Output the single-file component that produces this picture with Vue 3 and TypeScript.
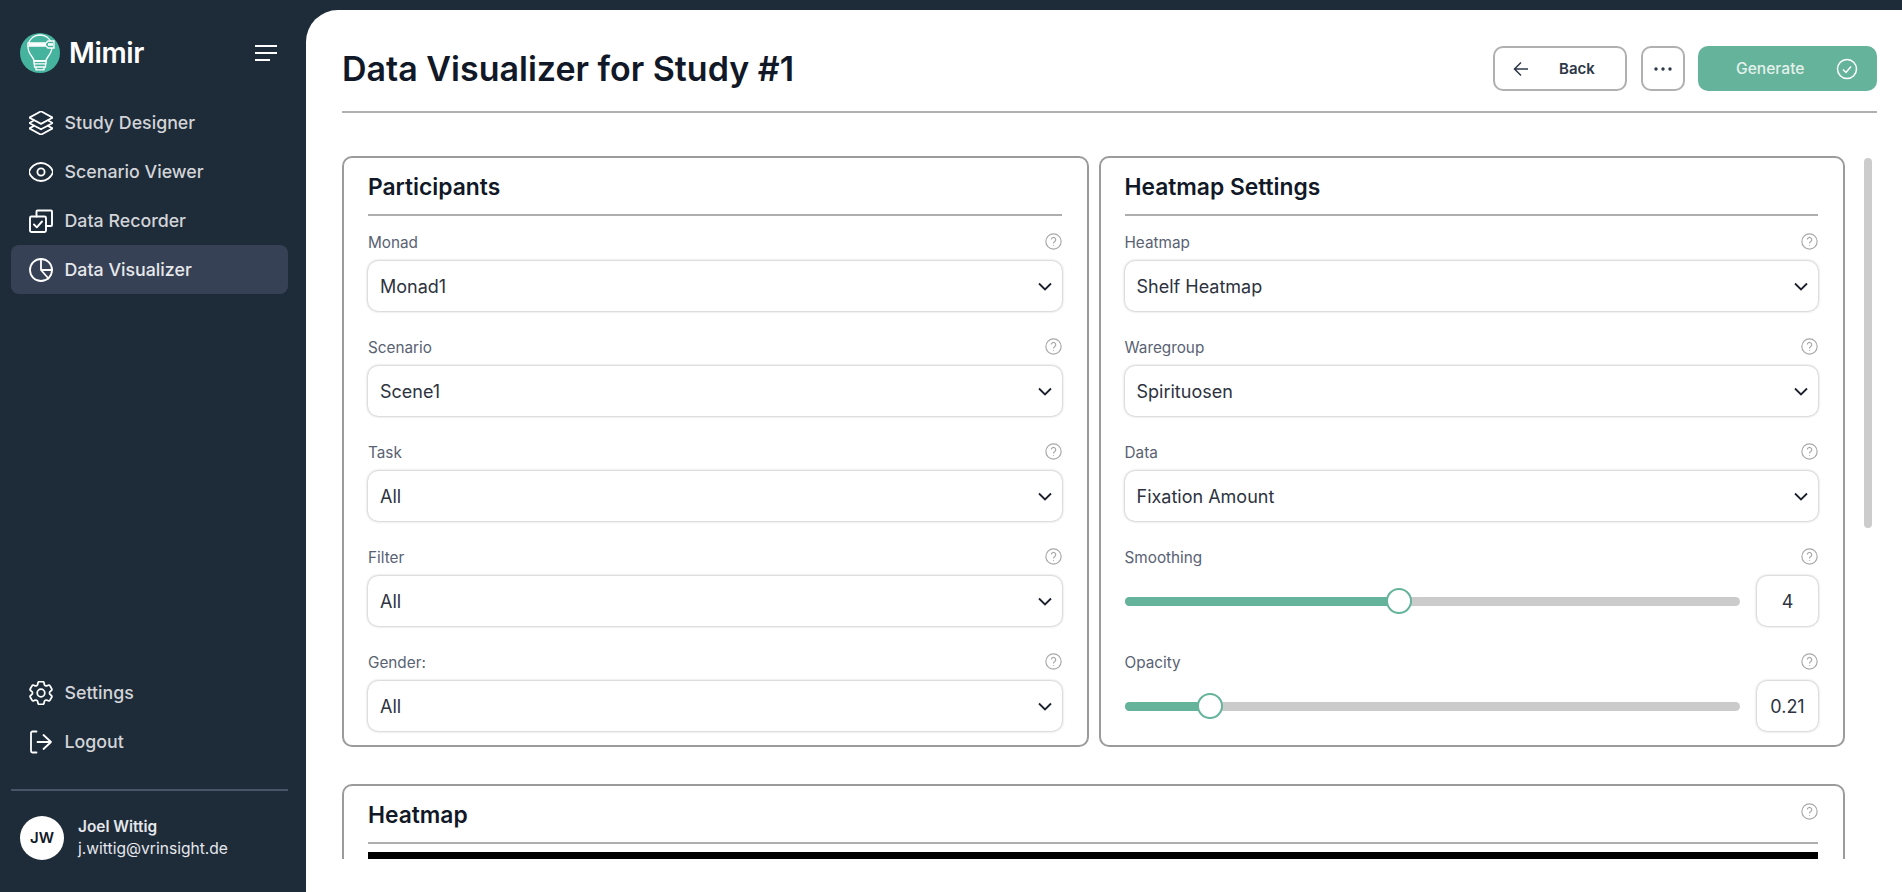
<script setup lang="ts">
interface SelectField { label: string; value: string }
interface SliderField { label: string; value: string; percent: number }

const participantFields: SelectField[] = [
  { label: 'Monad', value: 'Monad1' },
  { label: 'Scenario', value: 'Scene1' },
  { label: 'Task', value: 'All' },
  { label: 'Filter', value: 'All' },
  { label: 'Gender:', value: 'All' },
]
const heatmapSelects: SelectField[] = [
  { label: 'Heatmap', value: 'Shelf Heatmap' },
  { label: 'Waregroup', value: 'Spirituosen' },
  { label: 'Data', value: 'Fixation Amount' },
]
const sliders: SliderField[] = [
  { label: 'Smoothing', value: '4', percent: 44.6 },
  { label: 'Opacity', value: '0.21', percent: 13.9 },
]
</script>

<template>
  <div class="app">
    <aside class="sidebar">
      <div class="brand">
        <svg class="logo" viewBox="0 0 40 40" fill="none" stroke="#fff" stroke-width="1.300">
          <circle cx="20" cy="20" r="20" fill="#45b39d" stroke="none" />
          <path d="M14 28c0-4-6-6.500-6-14C8 7 13.500 2 20 2s12 5 12 12c0 7.500-6 10-6 14z" />
          <path d="M14 28h12v2.800H14zM14.500 31v3h11v-3M16 34v2.800h8V34" />
          <path d="M8 10h18l2-2h6v7h-6l-2-2H8z" fill="#45b39d" />
          <path d="M9 11.500h17M28 11.500h5" stroke-width="2.400" />
        </svg>
        <span class="brand-name">Mimir</span>
        <svg class="menu" viewBox="0 0 22 16" fill="none" stroke="#fff" stroke-width="2">
          <path d="M0 1h22M0 8h22M0 15h15" />
        </svg>
      </div>

      <nav class="nav">
        <a class="nav-item">
          <svg class="nav-icon" viewBox="2 2 20 20" fill="none" stroke="currentColor" stroke-width="1.500" stroke-linecap="round" stroke-linejoin="round">
            <path d="M6.429 9.750 2.250 12l4.179 2.250m0-4.500 5.571 3 5.571-3m-11.142 0L2.250 7.500 12 2.250l9.750 5.250-4.179 2.250m0 0L21.750 12l-4.179 2.250m0 0 4.179 2.250L12 21.750 2.250 16.500l4.179-2.250m11.142 0-5.571 3-5.571-3" />
          </svg>
          Study Designer
        </a>
        <a class="nav-item">
          <svg class="nav-icon" viewBox="2 2 20 20" fill="none" stroke="currentColor" stroke-width="1.500" stroke-linecap="round" stroke-linejoin="round">
            <path d="M2.036 12.322a1.012 1.012 0 0 1 0-.639C3.423 7.510 7.360 4.500 12 4.500c4.638 0 8.573 3.007 9.963 7.178.07.207.07.431 0 .639C20.577 16.490 16.640 19.500 12 19.500c-4.638 0-8.573-3.007-9.963-7.178Z" />
            <path d="M15 12a3 3 0 1 1-6 0 3 3 0 0 1 6 0Z" />
          </svg>
          Scenario Viewer
        </a>
        <a class="nav-item">
          <svg class="nav-icon" viewBox="0 0 24 24" fill="none" stroke="currentColor" stroke-width="1.900" stroke-linecap="round" stroke-linejoin="round">
            <path d="M7.500 7.500V2.500a1 1 0 0 1 1-1H22a1 1 0 0 1 1 1V16a1 1 0 0 1-1 1h-5" />
            <rect x="1" y="7.500" width="16" height="15.500" rx="1.500" />
            <path d="m5 15.500 2.800 2.800L13 12.500" />
          </svg>
          Data Recorder
        </a>
        <a class="nav-item active">
          <svg class="nav-icon" viewBox="0 0 24 24" fill="none" stroke="currentColor" stroke-width="1.800" stroke-linecap="round" stroke-linejoin="round">
            <circle cx="12" cy="12" r="11" />
            <path d="M12 1v11h11M12 12l7.500 8.500" />
          </svg>
          Data Visualizer
        </a>
      </nav>

      <nav class="nav nav-bottom">
        <a class="nav-item">
          <svg class="nav-icon" viewBox="2.500 2.500 19 19" fill="none" stroke="currentColor" stroke-width="1.400" stroke-linecap="round" stroke-linejoin="round">
            <path d="M9.594 3.940c.09-.542.560-.940 1.110-.940h2.593c.550 0 1.020.398 1.110.940l.213 1.281c.063.374.313.686.645.870.074.040.147.083.220.127.325.196.720.257 1.075.124l1.217-.456a1.125 1.125 0 0 1 1.370.490l1.296 2.247a1.125 1.125 0 0 1-.260 1.431l-1.003.827c-.293.241-.438.613-.430.992a7.723 7.723 0 0 1 0 .255c-.008.378.137.750.430.991l1.004.827c.424.350.534.955.260 1.430l-1.298 2.247a1.125 1.125 0 0 1-1.369.491l-1.217-.456c-.355-.133-.750-.072-1.076.124a6.470 6.470 0 0 1-.220.128c-.331.183-.581.495-.644.869l-.213 1.281c-.090.543-.560.940-1.110.940h-2.594c-.550 0-1.019-.398-1.110-.940l-.213-1.281c-.062-.374-.312-.686-.644-.870a6.520 6.520 0 0 1-.220-.127c-.325-.196-.720-.257-1.076-.124l-1.217.456a1.125 1.125 0 0 1-1.369-.490l-1.297-2.247a1.125 1.125 0 0 1 .260-1.431l1.004-.827c.292-.240.437-.613.430-.991a6.932 6.932 0 0 1 0-.255c.007-.380-.138-.751-.430-.992l-1.004-.827a1.125 1.125 0 0 1-.260-1.430l1.297-2.247a1.125 1.125 0 0 1 1.370-.491l1.216.456c.356.133.751.072 1.076-.124.072-.044.146-.086.220-.128.332-.183.582-.495.644-.869l.214-1.280Z" />
            <path d="M15 12a3 3 0 1 1-6 0 3 3 0 0 1 6 0Z" />
          </svg>
          Settings
        </a>
        <a class="nav-item">
          <svg class="nav-icon" viewBox="0 0 24 24" fill="none" stroke="currentColor" stroke-width="1.800" stroke-linecap="round" stroke-linejoin="round">
            <path d="M7.500 1.500H3.500A1.500 1.500 0 0 0 2 3v18a1.500 1.500 0 0 0 1.500 1.500h4M8.500 12H22m-7.500-7 7.500 7-7.500 7" />
          </svg>
          Logout
        </a>
      </nav>

      <div class="user">
        <div class="avatar">JW</div>
        <div class="user-text">
          <div class="user-name">Joel Wittig</div>
          <div class="user-mail">j.wittig@vrinsight.de</div>
        </div>
      </div>
    </aside>

    <main class="main">
      <header class="header">
        <h1 class="title">Data Visualizer for Study #1</h1>
        <div class="actions">
          <button class="btn btn-back">
            <svg class="btn-icon" viewBox="0 0 16 16" fill="none" stroke="#2d3748" stroke-width="1.500">
              <path d="M15 8H1.500M8 1.500 1.500 8 8 14.500" />
            </svg>
            <span>Back</span>
          </button>
          <button class="btn btn-more">
            <svg class="dots" viewBox="0 0 18 4" fill="#2d3748">
              <circle cx="2" cy="2" r="1.700" /><circle cx="9" cy="2" r="1.700" /><circle cx="16" cy="2" r="1.700" />
            </svg>
          </button>
          <button class="btn btn-generate">
            <span>Generate</span>
            <svg class="check" viewBox="0 0 22 22" fill="none" stroke="#fff" stroke-width="1.500">
              <circle cx="11" cy="11" r="9.500" /><path d="m7 11.500 3 3 5-6" />
            </svg>
          </button>
        </div>
      </header>

      <div class="scroll">
        <div class="thumb-bar"></div>
        <div class="grid">
          <section class="card">
            <h2 class="card-title">Participants</h2>
            <div v-for="f in participantFields" :key="f.label" class="field">
              <div class="field-head">
                <label>{{ f.label }}</label>
                <svg class="help" viewBox="0 0 16 16" fill="none" stroke="#a8a8a8" stroke-width="1.100">
                  <circle cx="8" cy="8" r="7.200" />
                  <path d="M5.900 6.200a2.100 2.100 0 1 1 3.300 1.800c-.8.500-1.200.9-1.200 1.800M8 11.500v.8" />
                </svg>
              </div>
              <div class="select">
                <span>{{ f.value }}</span>
                <svg class="chev" viewBox="0 0 14 9" fill="none" stroke="#1a202c" stroke-width="1.800">
                  <path d="m1 1.500 6 6 6-6" />
                </svg>
              </div>
            </div>
          </section>

          <section class="card">
            <h2 class="card-title">Heatmap Settings</h2>
            <div v-for="f in heatmapSelects" :key="f.label" class="field">
              <div class="field-head">
                <label>{{ f.label }}</label>
                <svg class="help" viewBox="0 0 16 16" fill="none" stroke="#a8a8a8" stroke-width="1.100">
                  <circle cx="8" cy="8" r="7.200" />
                  <path d="M5.900 6.200a2.100 2.100 0 1 1 3.300 1.800c-.8.500-1.200.9-1.200 1.800M8 11.500v.8" />
                </svg>
              </div>
              <div class="select">
                <span>{{ f.value }}</span>
                <svg class="chev" viewBox="0 0 14 9" fill="none" stroke="#1a202c" stroke-width="1.800">
                  <path d="m1 1.500 6 6 6-6" />
                </svg>
              </div>
            </div>
            <div v-for="s in sliders" :key="s.label" class="field">
              <div class="field-head">
                <label>{{ s.label }}</label>
                <svg class="help" viewBox="0 0 16 16" fill="none" stroke="#a8a8a8" stroke-width="1.100">
                  <circle cx="8" cy="8" r="7.200" />
                  <path d="M5.900 6.200a2.100 2.100 0 1 1 3.300 1.800c-.8.500-1.200.9-1.200 1.800M8 11.500v.8" />
                </svg>
              </div>
              <div class="slider-row">
                <div class="track">
                  <div class="fill" :style="{ width: s.percent + '%' }"></div>
                  <div class="knob" :style="{ left: s.percent + '%' }"></div>
                </div>
                <div class="num">{{ s.value }}</div>
              </div>
            </div>
          </section>
        </div>

        <section class="card card-wide">
          <h2 class="card-title">Heatmap</h2>
          <svg class="help help-wide" viewBox="0 0 16 16" fill="none" stroke="#a8a8a8" stroke-width="1.100">
            <circle cx="8" cy="8" r="7.200" />
            <path d="M5.900 6.200a2.100 2.100 0 1 1 3.300 1.800c-.8.500-1.200.9-1.200 1.800M8 11.500v.8" />
          </svg>
          <div class="canvas"></div>
        </section>
      </div>
    </main>
  </div>
</template>

<style scoped>
.app {
  display: flex;
  width: 1902px;
  height: 892px;
  overflow: hidden;
  background: #1e2b39;
  font-family: Inter, "Liberation Sans", sans-serif;
}
.sidebar {
  width: 306px;
  flex: none;
  display: flex;
  flex-direction: column;
  padding: 0 18px 0 11px;
  box-sizing: border-box;
  color: #fff;
}
.brand {
  display: flex;
  align-items: center;
  height: 40px;
  margin-top: 33px;
  padding-left: 9px;
}
.logo { width: 40px; height: 40px; flex: none; }
.brand-name {
  margin-left: 9px;
  font-size: 28px;
  font-weight: 600;
  letter-spacing: -0.35px;
}
.menu { width: 22px; height: 16px; margin-left: auto; margin-right: 11px; }
.nav { display: flex; flex-direction: column; margin-top: 25px; }
.nav-bottom { margin-top: auto; }
.nav-item {
  display: flex;
  align-items: center;
  gap: 11.500px;
  height: 49px;
  padding-left: 18px;
  border-radius: 8px;
  font-size: 17.800px;
  font-weight: 500;
  color: #d2d4d8;
}
.nav-item.active { background: #374155; color: #e6e8eb; }
.nav-icon { width: 24px; height: 24px; color: #fff; flex: none; }
.user {
  display: flex;
  align-items: center;
  margin-top: 23px;
  padding: 24px 0 32px 9px;
  border-top: 2px solid #475569;
}
.avatar {
  width: 44px;
  height: 44px;
  flex: none;
  border-radius: 50%;
  background: #fff;
  color: #111827;
  display: flex;
  align-items: center;
  justify-content: center;
  font-size: 15px;
  font-weight: 600;
}
.user-text { margin: 1px 0 0 14px; line-height: 22px; }
.user-name { font-size: 15.400px; font-weight: 600; color: #e5e7eb; }
.user-mail { font-size: 15.600px; font-weight: 400; color: #e5e7eb; }

.main {
  flex: 1;
  min-width: 0;
  margin-top: 10px;
  background: #fff;
  border-radius: 32px 0 0 0;
  padding: 0 25px 33px 36px;
  display: flex;
  flex-direction: column;
  box-sizing: border-box;
}
.header {
  flex: none;
  height: 103px;
  display: flex;
  align-items: center;
  justify-content: space-between;
  padding-top: 16px;
  box-sizing: border-box;
  border-bottom: 2px solid #b0b0b0;
}
.title {
  margin: 0;
  font-size: 34px;
  font-weight: 600;
  color: #111827;
}
.actions { display: flex; gap: 13px; }
.btn {
  height: 45px;
  box-sizing: border-box;
  border-radius: 10px;
  font-family: inherit;
  font-size: 15px;
  font-weight: 600;
  display: flex;
  align-items: center;
  background: #fff;
  border: 2px solid #b0b0b0;
  color: #2d3748;
  padding: 0;
}
.btn-back { width: 134px; margin-right: 1px; padding-left: 18px; gap: 30px; }
.btn-icon { width: 16px; height: 16px; }
.btn-more { width: 44px; justify-content: center; }
.dots { width: 18px; height: 4px; }
.btn-generate {
  width: 179px;
  border: none;
  background: #65b39a;
  color: #e3f1ec;
  font-size: 15.600px;
  font-weight: 500;
  padding-left: 38px;
  padding-right: 19px;
  justify-content: space-between;
}
.check { width: 22px; height: 22px; }
.scroll {
  position: relative;
  flex: 1;
  min-height: 0;
  overflow: hidden;
  padding: 43px 32px 0 0;
}
.thumb-bar {
  position: absolute;
  right: 5px;
  top: 45px;
  width: 8px;
  height: 370px;
  border-radius: 4px;
  background: #cccccc;
}
.grid {
  display: grid;
  grid-template-columns: 1fr 1fr;
  gap: 10px;
}
.card {
  position: relative;
  border: 2px solid #9b9b9b;
  border-radius: 10px;
  padding: 0 25px 0 24px;
  height: 591px;
  box-sizing: border-box;
}
.card-title {
  margin: 0 0 4px;
  height: 58px;
  line-height: 57px;
  font-size: 22.800px;
  font-weight: 600;
  color: #111827;
  border-bottom: 2px solid #aeaeae;
  box-sizing: border-box;
}
.field { height: 105px; }
.field-head {
  display: flex;
  justify-content: space-between;
  align-items: flex-start;
  height: 41px;
  padding-top: 13px;
  box-sizing: border-box;
}
.field-head label {
  font-size: 15.300px;
  color: #596273;
  line-height: 20px;
}
.help { width: 17px; height: 17px; flex: none; margin: 0; }
.select {
  height: 50px;
  padding: 0 10px 0 12px;
  display: flex;
  align-items: center;
  justify-content: space-between;
  border-radius: 10px;
  background: #fff;
  font-size: 18px;
  color: #2d3340;
  box-shadow: 0 0 3px rgba(0, 0, 0, 0.38);
}
.chev { width: 14px; height: 9px; }
.slider-row {
  display: flex;
  align-items: center;
  gap: 17px;
  height: 50px;
}
.track {
  position: relative;
  flex: 1;
  height: 9px;
  border-radius: 5px;
  background: #cbcbcb;
}
.fill {
  position: absolute;
  left: 0;
  top: 0;
  bottom: 0;
  border-radius: 5px 0 0 5px;
  background: #65b39a;
}
.knob {
  position: absolute;
  top: 50%;
  width: 26px;
  height: 26px;
  transform: translate(-50%, -50%);
  border-radius: 50%;
  background: #fff;
  border: 2px solid #65b39a;
  box-sizing: border-box;
}
.num {
  width: 61px;
  height: 50px;
  display: flex;
  align-items: center;
  justify-content: center;
  border-radius: 10px;
  font-size: 18px;
  color: #2d3340;
  box-shadow: 0 0 3px rgba(0, 0, 0, 0.38);
}
.card-wide { margin-top: 37px; height: 600px; }
.card-wide .card-title { margin: 0; }
.help-wide { position: absolute; right: 25px; top: 17px; margin: 0; }
.canvas { margin-top: 8px; height: 500px; background: #000; }
</style>
